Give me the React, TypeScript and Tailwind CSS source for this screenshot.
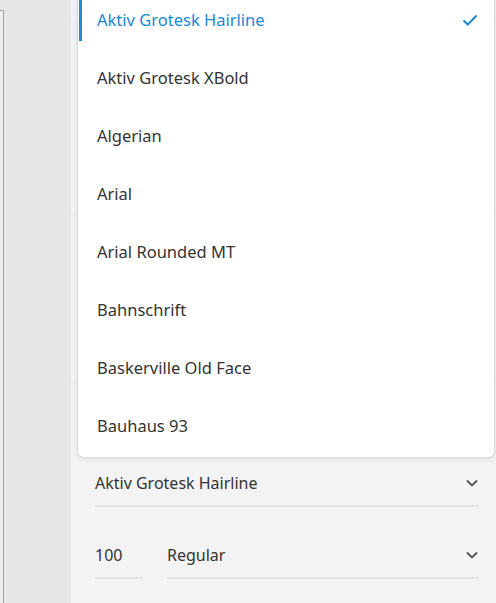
const fonts = [
  'Aktiv Grotesk Hairline',
  'Aktiv Grotesk XBold',
  'Algerian',
  'Arial',
  'Arial Rounded MT',
  'Bahnschrift',
  'Baskerville Old Face',
  'Bauhaus 93',
]

function Chevron({ className = '' }: { className?: string }) {
  return (
    <svg viewBox="0 0 12 8" className={`w-[12px] h-[8px] ${className}`} fill="none">
      <path d="M1 1.5 6 6.5 11 1.5" stroke="#555" strokeWidth="1.8" />
    </svg>
  )
}

export default function App() {
  const selected = 0
  return (
    <div
      className="relative w-[496px] h-[603px] overflow-hidden flex bg-[#e6e6e6] text-[#333]"
      style={{ fontFamily: '"Noto Sans", "Open Sans", sans-serif' }}
    >
      <div className="w-[71px] shrink-0 flex">
        <div className="w-[4px] mt-[10px] border-t border-r border-[#a3a3a3] bg-[#ebebeb]" />
      </div>

      <div className="flex-1 bg-[#f3f3f3] flex flex-col">
        <div className="h-[23px] border-b border-[#e9e9e9]" />
        <div className="h-[192px] border-b border-[#e9e9e9]" />
        <div className="h-[168px] border-b border-[#e9e9e9]" />
        <div className="flex-1 pl-[24px] pr-[17px] pt-[78px]">
          <div className="flex items-center justify-between h-[46px] border-b-2 border-[#e3e3e3]">
            <span className="text-[16px]">Aktiv Grotesk Hairline</span>
            <Chevron className="mr-[1px]" />
          </div>
          <div className="flex gap-[24px] mt-[26px]">
            <div className="w-[48px] h-[46px] flex items-center border-b-2 border-[#e3e3e3] text-[16px]">
              100
            </div>
            <div className="flex-1 h-[46px] flex items-center justify-between border-b-2 border-[#e3e3e3] text-[16px]">
              <span>Regular</span>
              <Chevron className="mr-[1px]" />
            </div>
          </div>
        </div>
      </div>

      <div className="absolute left-[77px] top-0 w-[418px] h-[458px] bg-white border border-t-0 border-[#d9d9d9] rounded-b-[7px] overflow-hidden shadow-[0_2px_6px_rgba(0,0,0,0.08)]">
        <ul className="mt-[-9px]">
          {fonts.map((f, i) => (
            <li key={f} className="relative h-[58px] flex items-center pl-[19px] pr-[16px] text-[16.5px]">
              {i === selected && (
                <span className="absolute left-[1px] top-[9px] bottom-[8px] w-[3px] bg-[#1e88d6]" />
              )}
              <span className={`flex-1 ${i === selected ? 'text-[#1b87d4]' : 'text-[#333]'}`}>{f}</span>
              {i === selected && (
                <svg viewBox="0 0 16 12" className="w-[16px] h-[12px]" fill="none">
                  <path d="M1.5 6.5 5.8 10.5 14.5 1.5" stroke="#1e88d6" strokeWidth="2" />
                </svg>
              )}
            </li>
          ))}
        </ul>
      </div>
    </div>
  )
}
